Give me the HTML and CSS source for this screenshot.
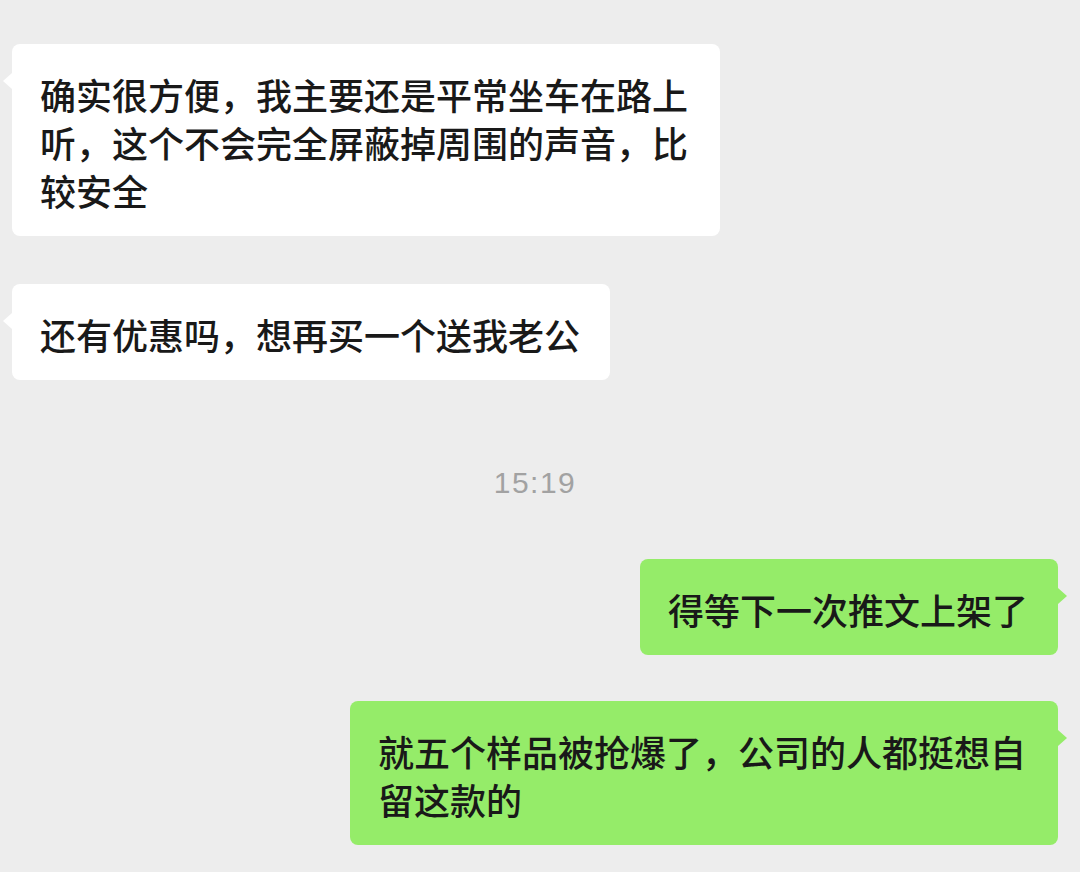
FILE: index.html
```html
<!DOCTYPE html>
<html lang="zh-CN">
<head>
    <meta charset="UTF-8">
    <meta name="viewport" content="width=device-width, initial-scale=1.0">
    <title>聊天记录</title>
    <link rel="stylesheet" href="styles.css">
</head>
<body>
    <div class="chat">
        <div class="row left">
            <div class="bubble">确实很方便，我主要还是平常坐车在路上听，这个不会完全屏蔽掉周围的声音，比较安全</div>
        </div>
        <div class="row left">
            <div class="bubble">还有优惠吗，想再买一个送我老公</div>
        </div>

        <div class="time">15:19</div>

        <div class="row right">
            <div class="bubble mine">得等下一次推文上架了</div>
        </div>
        <div class="row right next">
            <div class="bubble mine">就五个样品被抢爆了，公司的人都挺想自留这款的</div>
        </div>
    </div>
</body>
</html>
```

FILE: styles.css
```css
body {
    margin: 0;
    padding: 0;
    background-color: #ededed;
    font-family: "Noto Sans CJK SC", "Noto Sans", sans-serif;
    color: #191919;
    height: 872px;
    overflow: hidden;
}

.chat {
    display: flex;
    flex-direction: column;
    gap: 48px;
    padding: 44px 22px 0 12px;
}

.row {
    display: flex;
}

.row.left {
    justify-content: flex-start;
}

.row.right {
    justify-content: flex-end;
}

.row.next {
    margin-top: -2px;
}

.bubble {
    position: relative;
    box-sizing: border-box;
    max-width: 708px;
    padding: 26px 30px 22px 28px;
    background-color: #fff;
    border-radius: 8px;
    font-size: 36px;
    font-weight: 500;
    line-height: 48px;
}

/* little tail pointing at the avatar side */
.bubble::before {
    content: "";
    position: absolute;
    top: 29px;
    left: -9px;
    border-top: 8px solid transparent;
    border-bottom: 8px solid transparent;
    border-right: 9px solid #fff;
}

.bubble.mine {
    background-color: #95ec69;
}

.bubble.mine::before {
    left: auto;
    right: -9px;
    border-right: none;
    border-left: 9px solid #95ec69;
}

.time {
    margin: 37px 0 10px;
    text-align: center;
    font-family: "Liberation Sans", Arial, sans-serif;
    font-size: 30px;
    line-height: 36px;
    letter-spacing: 1.5px;
    color: #a2a2a2;
}
```
